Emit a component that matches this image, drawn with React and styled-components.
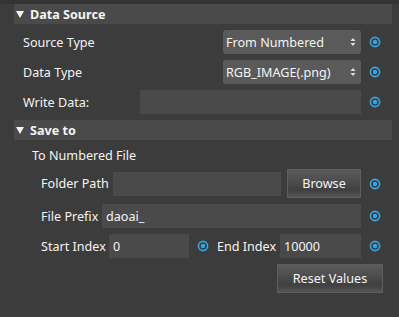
import React from 'react';
import styled, { createGlobalStyle } from 'styled-components';

const Global = createGlobalStyle`
  html, body {
    margin: 0;
    padding: 0;
    background: #3c3c3c;
  }
  body {
    font-family: "Noto Sans", "Open Sans", sans-serif;
    font-size: 12.6px;
    color: #f4f4f4;
  }
`;

const Page = styled.div`
  width: 399px;
  height: 317px;
  background: #3c3c3c;
  border-top: 4px solid #343434;
  box-sizing: border-box;
  overflow: hidden;
`;

const Panel = styled.div`
  margin-left: 14px;
  width: 378px;
  display: flex;
  flex-direction: column;
`;

const Header = styled.div`
  height: 20px;
  background: #4a4a4a;
  display: flex;
  align-items: center;
  gap: 6px;
  padding-left: 2px;
  font-weight: bold;
  margin-bottom: ${p => p.$after ?? 6}px;
`;

const Arrow = styled.span`
  width: 0;
  height: 0;
  border-left: 4px solid transparent;
  border-right: 4px solid transparent;
  border-top: 7px solid #f4f4f4;
`;

const Row = styled.div`
  display: flex;
  align-items: center;
  height: ${p => p.$h || 24}px;
  padding-left: ${p => p.$indent || 9}px;
  padding-right: 11px;
  margin-bottom: ${p => p.$after ?? 6}px;
`;

const Label = styled.div`
  width: ${p => p.$w}px;
  flex: none;
  white-space: nowrap;
`;

const Caption = styled.div`
  padding-left: 18px;
  height: 20px;
  display: flex;
  align-items: center;
  margin-top: 5px;
  margin-bottom: 4px;
`;

const Select = styled.div`
  width: 138px;
  height: 24px;
  margin-left: auto;
  flex: none;
  background: #5a5a5a;
  border-radius: 3px;
  display: flex;
  align-items: center;
  padding: 0 5px 0 3px;
  box-sizing: border-box;
  justify-content: space-between;
  white-space: nowrap;
`;

const Field = styled.div`
  flex: ${p => (p.$w ? 'none' : '1')};
  width: ${p => (p.$w ? `${p.$w}px` : 'auto')};
  height: 24px;
  background: #4a4a4a;
  display: flex;
  align-items: center;
  padding-left: 4px;
  box-sizing: border-box;
`;

const Button = styled.div`
  flex: none;
  width: ${p => p.$w}px;
  height: ${p => p.$h || 29}px;
  box-sizing: border-box;
  border: 1px solid #5e5e5e;
  background: linear-gradient(#5c5c5c 0%, #4b4b4b 45%, #404040 75%, #565656 100%);
  display: flex;
  align-items: center;
  justify-content: center;
  margin-left: ${p => p.$ml || 0}px;
`;

const Dot = styled.svg`
  flex: none;
  width: 12px;
  height: 12px;
  margin-left: 8px;
`;

const Spacer = styled.div`
  width: ${p => p.$w}px;
  flex: none;
`;

const Footer = styled.div`
  display: flex;
  justify-content: flex-end;
  padding-right: 9px;
`;

const Target = () => (
  <Dot viewBox="0 0 12 12">
    <circle cx="6" cy="6" r="4.6" fill="none" stroke="#34a8e6" strokeWidth="1.6" />
    <circle cx="6" cy="6" r="2.2" fill="#34a8e6" />
  </Dot>
);

const Spin = () => (
  <svg width="6" height="10" viewBox="0 0 6 10">
    <path d="M3 1 L5.5 4 L0.5 4 Z" fill="#e0e0e0" />
    <path d="M3 9 L5.5 6 L0.5 6 Z" fill="#e0e0e0" />
  </svg>
);

export default function App() {
  return (
    <>
      <Global />
      <Page>
        <Panel>
          <Header>
            <Arrow />
            Data Source
          </Header>
          <Row>
            <Label $w={120}>Source Type</Label>
            <Select>
              <span>From Numbered</span>
              <Spin />
            </Select>
            <Target />
          </Row>
          <Row>
            <Label $w={120}>Data Type</Label>
            <Select>
              <span>RGB_IMAGE(.png)</span>
              <Spin />
            </Select>
            <Target />
          </Row>
          <Row>
            <Label $w={117}>Write Data:</Label>
            <Field />
            <Target />
          </Row>
          <Header $after={0}>
            <Arrow />
            Save to
          </Header>
          <Caption>To Numbered File</Caption>
          <Row $indent={27} $h={29}>
            <Label $w={72}>Folder Path</Label>
            <Field $w={168} />
            <Button $w={74} $ml={6}>Browse</Button>
            <Target />
          </Row>
          <Row $indent={27}>
            <Label $w={61}>File Prefix</Label>
            <Field>daoai_</Field>
            <Target />
          </Row>
          <Row $indent={27}>
            <Label $w={68}>Start Index</Label>
            <Field $w={80}>0</Field>
            <Target />
            <Spacer $w={8} />
            <Label $w={63}>End Index</Label>
            <Field>10000</Field>
            <Target />
          </Row>
          <Footer>
            <Button $w={106}>Reset Values</Button>
          </Footer>
        </Panel>
      </Page>
    </>
  );
}
